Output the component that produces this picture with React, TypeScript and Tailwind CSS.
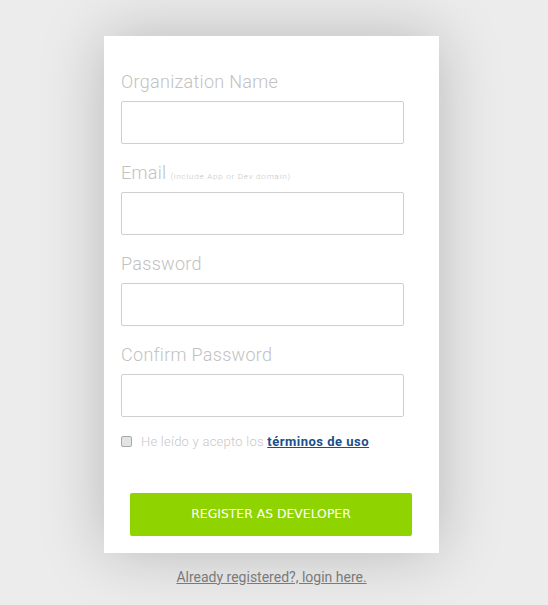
import React from "react";

const font = { fontFamily: "Roboto, 'Liberation Sans', sans-serif" };

function Field({ label, hint, type = "text" }: { label: string; hint?: string; type?: string }) {
  return (
    <div className="mb-[17px]">
      <label className="mb-[7px] flex h-[24px] items-baseline gap-[4px] text-[18px] font-light leading-[24px] tracking-[0.3px] text-[#c2c2c2]">
        {label}
        {hint && (
          <span className="text-[8px] font-light leading-[8px] tracking-[0.8px] text-[#c4c4c4]">{hint}</span>
        )}
      </label>
      <input
        type={type}
        className="block h-[43px] w-[283px] rounded-[2px] border border-[#cfcfcf] bg-white px-3 outline-none"
      />
    </div>
  );
}

export default function App() {
  return (
    <div className="min-h-screen bg-[#ececec] pt-[36px]" style={font}>
      <div className="flex flex-col items-center pr-[5px]">
        {/* Card */}
        <div className="w-[335px] bg-white px-[17px] pb-[17px] pt-[34px] shadow-[0_0_60px_rgba(0,0,0,0.22)]">
          <Field label="Organization Name" />
          <Field label="Email" hint="(include App or Dev domain)" type="email" />
          <Field label="Password" type="password" />
          <Field label="Confirm Password" type="password" />

          <div className="-mt-[2px] flex items-center gap-[9px] text-[13px] font-light text-[#c8c8c8]">
            <input
              type="checkbox"
              className="m-0 h-[11px] w-[11px] appearance-none rounded-[2px] border border-[#a8a8a8] bg-[#e4e4e4]"
            />
            <span className="tracking-[0.25px]">
              He leído y acepto los{" "}
              <a href="#" className="font-bold tracking-[0.5px] text-[#1b4f8a] underline">
                términos de uso
              </a>
            </span>
          </div>

          <button
            className="ml-[9px] mt-[41px] h-[43px] w-[282px] rounded-[2px] bg-[#8fd400] text-[12.4px] text-white"
            style={{ fontFamily: "'DejaVu Sans', Verdana, sans-serif" }}
          >
            REGISTER AS DEVELOPER
          </button>
        </div>

        <a href="#" className="mt-[14px] text-[14px] text-[#7a7a7a] underline">
          Already registered?, login here.
        </a>
      </div>
    </div>
  );
}
